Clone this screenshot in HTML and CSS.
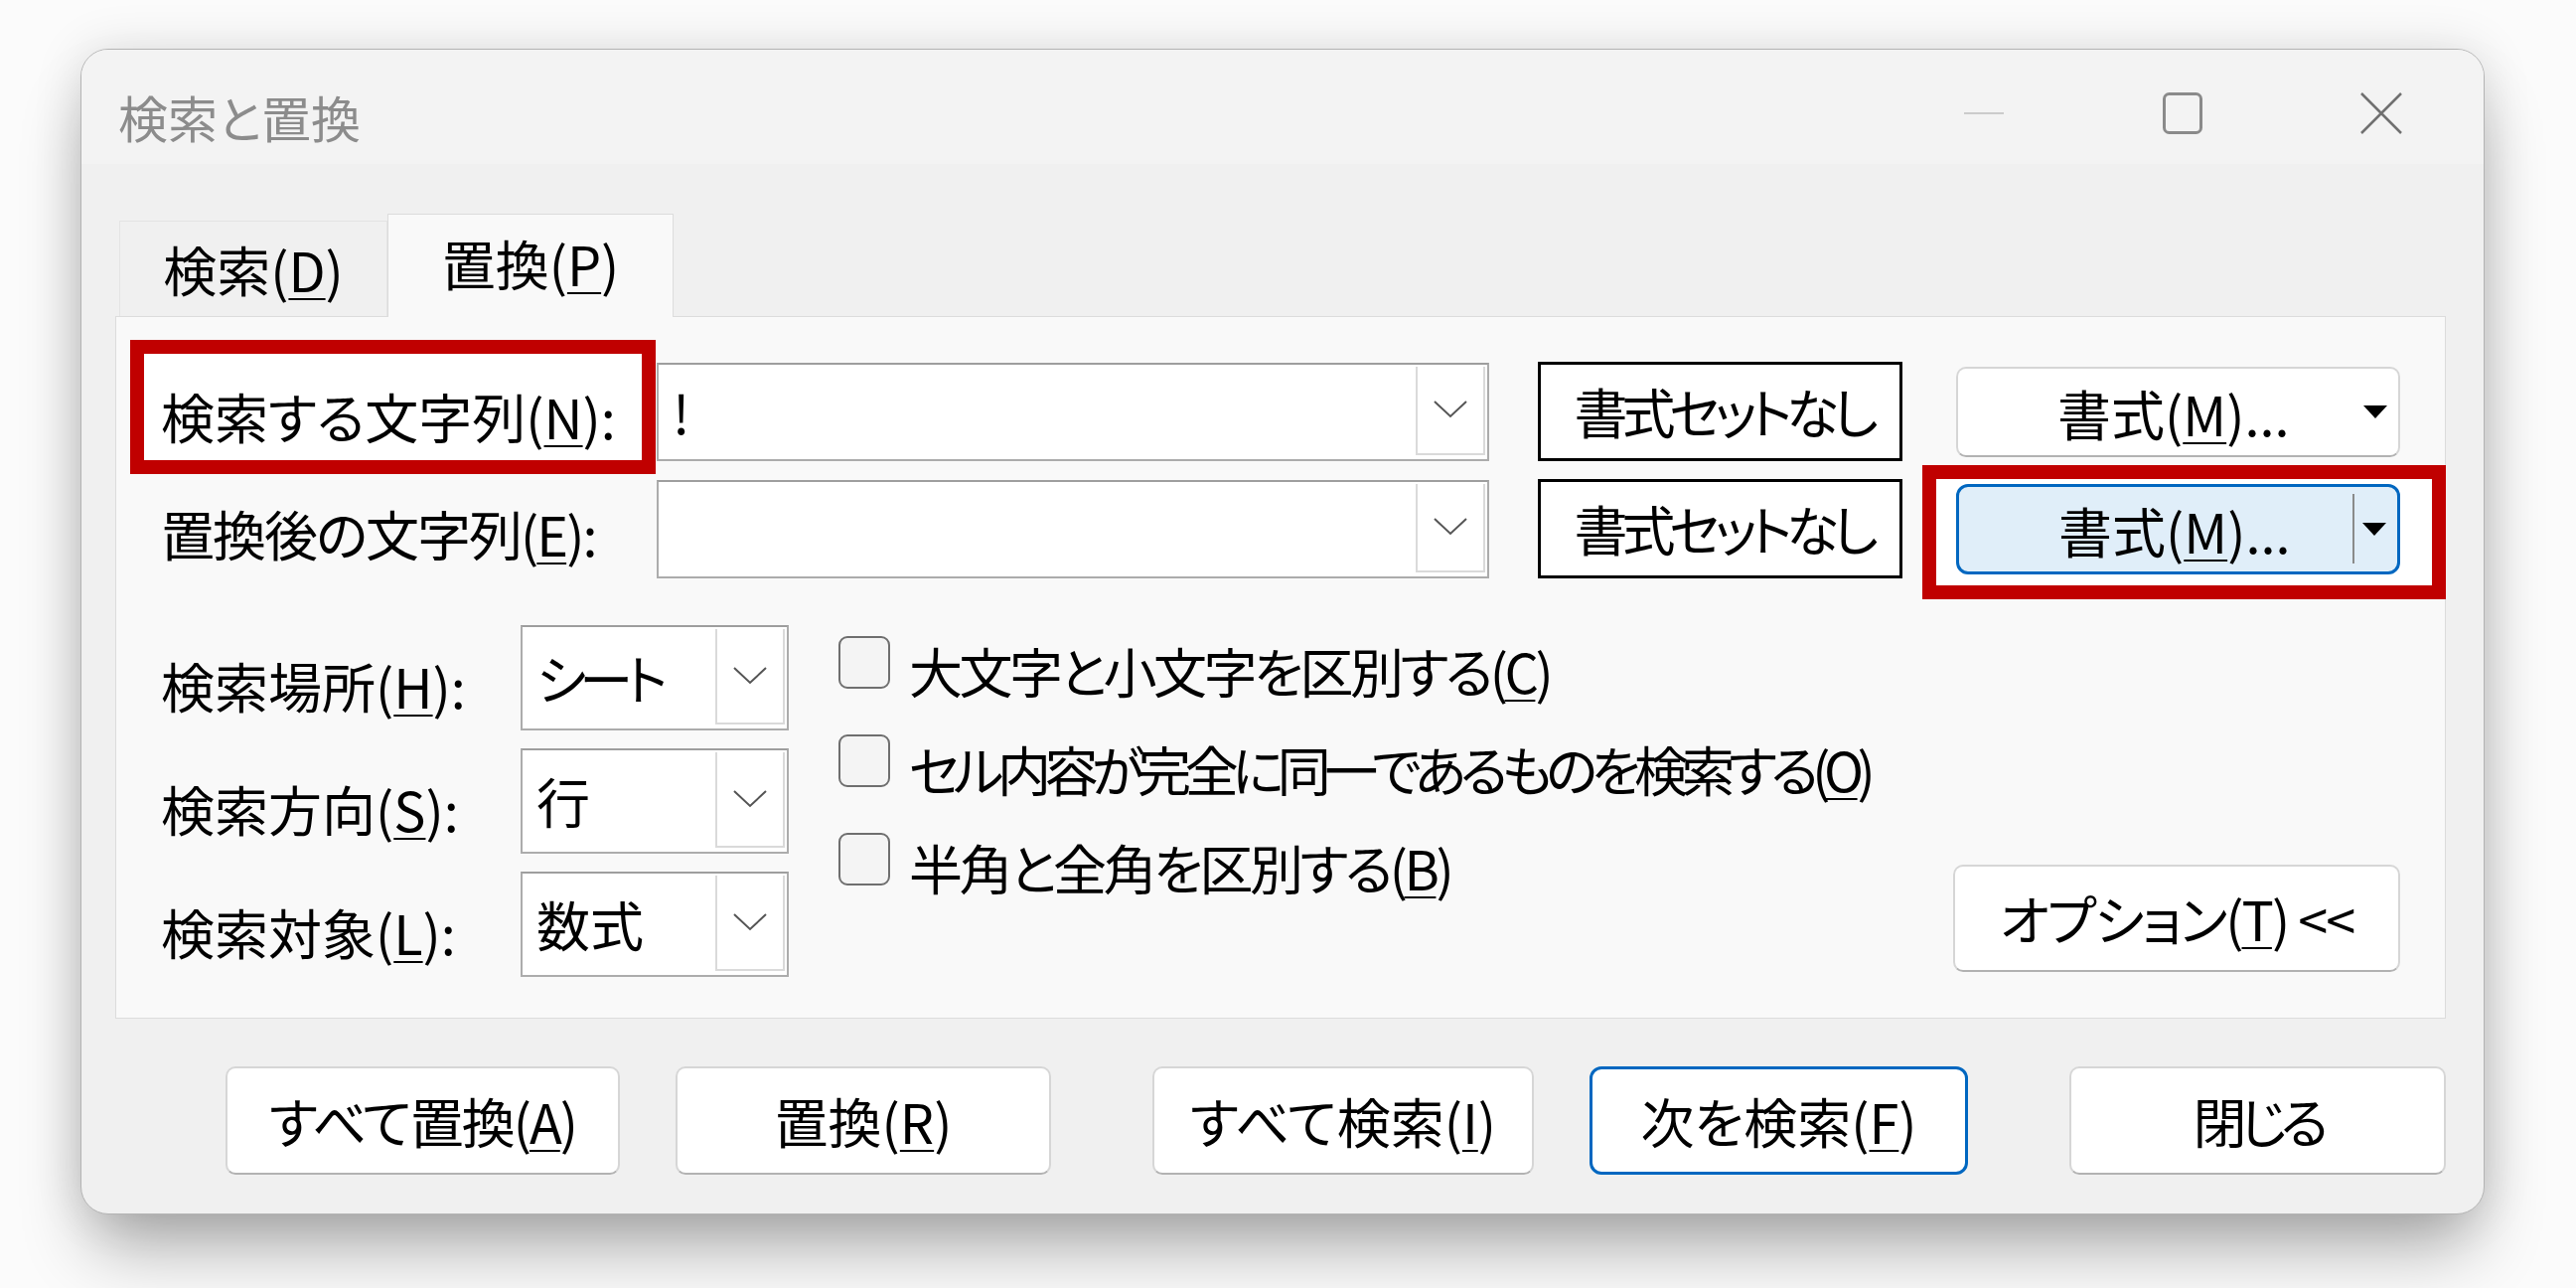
FILE: index.html
```html
<!DOCTYPE html>
<html lang="ja">
<head>
    <meta charset="UTF-8">
    <title>検索と置換</title>
    <link rel="stylesheet" href="styles.css">
</head>
<body>

<div class="dialog">
    <div class="titlebar">
        <span class="title">検索と置換</span>
        <div class="controls">
            <span class="ctl"><svg width="40" height="4"><line x1="0" y1="2" x2="40" y2="2" stroke="#cbcbcb" stroke-width="2"/></svg></span>
            <span class="ctl"><svg width="40" height="42"><rect x="1.5" y="1.5" width="37" height="39" rx="5" fill="none" stroke="#8a8a8a" stroke-width="3"/></svg></span>
            <span class="ctl"><svg width="44" height="42"><path d="M2 1 L42 41 M42 1 L2 41" stroke="#707070" stroke-width="2.5" fill="none"/></svg></span>
        </div>
    </div>

    <div class="content">
        <div class="tabs">
            <div class="tab">検索(<u>D</u>)</div>
            <div class="tab active">置換(<u>P</u>)</div>
        </div>

        <div class="panel">
            <div class="row">
                <div class="label-cell">
                    <span class="mark mark-label"></span>
                    <span class="label">検索する文字列(<u>N</u>):</span>
                </div>
                <div class="combo wide">
                    <span class="value">!</span>
                    <span class="drop"><svg width="34" height="18"><polyline points="1,1 17,16 33,1" fill="none" stroke="#555" stroke-width="2"/></svg></span>
                </div>
                <button class="plain">書式セットなし</button>
                <div class="fmt-cell">
                    <button class="btn fmt">
                        <span class="fmt-text">書式(<u>M</u>)...</span>
                        <span class="split"></span>
                        <svg width="24" height="13"><polygon points="0,0 24,0 12,13" fill="#000"/></svg>
                    </button>
                </div>
            </div>

            <div class="row">
                <div class="label-cell">
                    <span class="label narrow">置換後の文字列(<u>E</u>):</span>
                </div>
                <div class="combo wide">
                    <span class="value"></span>
                    <span class="drop"><svg width="34" height="18"><polyline points="1,1 17,16 33,1" fill="none" stroke="#555" stroke-width="2"/></svg></span>
                </div>
                <button class="plain">書式セットなし</button>
                <div class="fmt-cell">
                    <span class="mark mark-btn"></span>
                    <button class="btn fmt hot">
                        <span class="fmt-text">書式(<u>M</u>)...</span>
                        <span class="split shown"></span>
                        <svg width="24" height="13"><polygon points="0,0 24,0 12,13" fill="#000"/></svg>
                    </button>
                </div>
            </div>

            <div class="lower">
                <div class="fields">
                    <span>検索場所(<u>H</u>):</span>
                    <div class="combo small">
                        <span class="value kana">シート</span>
                        <span class="drop"><svg width="34" height="18"><polyline points="1,1 17,16 33,1" fill="none" stroke="#555" stroke-width="2"/></svg></span>
                    </div>
                    <span>検索方向(<u>S</u>):</span>
                    <div class="combo small">
                        <span class="value">行</span>
                        <span class="drop"><svg width="34" height="18"><polyline points="1,1 17,16 33,1" fill="none" stroke="#555" stroke-width="2"/></svg></span>
                    </div>
                    <span>検索対象(<u>L</u>):</span>
                    <div class="combo small">
                        <span class="value">数式</span>
                        <span class="drop"><svg width="34" height="18"><polyline points="1,1 17,16 33,1" fill="none" stroke="#555" stroke-width="2"/></svg></span>
                    </div>
                </div>

                <div class="checks">
                    <label class="check"><span class="box"></span><span class="narrower">大文字と小文字を区別する(<u>C</u>)</span></label>
                    <label class="check"><span class="box"></span><span class="kana">セル内容が完全に同一であるものを検索する(<u>O</u>)</span></label>
                    <label class="check"><span class="box"></span><span class="narrower">半角と全角を区別する(<u>B</u>)</span></label>
                </div>

                <button class="btn options narrow">オプション(<u>T</u>) &lt;&lt;</button>
            </div>
        </div>

        <div class="actions">
            <div class="group">
                <button class="btn act w-all narrow">すべて置換(<u>A</u>)</button>
                <button class="btn act w-one">置換(<u>R</u>)</button>
            </div>
            <div class="group">
                <button class="btn act w-find">すべて検索(<u>I</u>)</button>
                <button class="btn act w-next default">次を検索(<u>F</u>)</button>
            </div>
            <button class="btn act w-close kana">閉じる</button>
        </div>
    </div>
</div>

</body>
</html>
```

FILE: styles.css
```css
html {
    height: 100%;
}
body {
    margin: 0;
    min-height: 100%;
    padding: 49px 0 0 81px;
    box-sizing: border-box;
    background-color: #fbfbfb;
    font-family: "Noto Sans CJK JP", "Noto Sans", sans-serif;
    font-feature-settings: "palt";
    font-size: 54px;
    line-height: 1;
    color: #000;
}
u {
    text-decoration-thickness: 2px;
    text-underline-offset: 6px;
}
button {
    font: inherit;
    color: inherit;
    padding: 0;
    cursor: default;
}

.narrow { letter-spacing: -2px; }
.narrower { letter-spacing: -3.5px; }
.kana { letter-spacing: -6.5px; }

/* window frame */
.dialog {
    width: 2420px;
    height: 1173px;
    box-sizing: border-box;
    border: 1px solid #b4b4b4;
    border-radius: 28px;
    background-color: #f0f0f0;
    box-shadow: 0 44px 70px -12px rgba(0, 0, 0, 0.32), 0 0 50px rgba(0, 0, 0, 0.12);
    overflow: hidden;
    display: flex;
    flex-direction: column;
}
.titlebar {
    height: 115px;
    box-sizing: border-box;
    padding: 18px 3px 0 37px;
    display: flex;
    align-items: center;
    background-color: #f3f3f3;
}
.title {
    font-size: 50px;
    color: #8c8c8c;
}
.controls {
    margin-left: auto;
    margin-top: -6px;
    display: flex;
}
.ctl {
    width: 200px;
    display: flex;
    justify-content: center;
    align-items: center;
}
.ctl svg {
    display: block;
}

.content {
    flex: 1;
    padding: 50px 38px 0 34px;
}

/* tabs */
.tabs {
    display: flex;
    align-items: flex-end;
    height: 103px;
    margin-left: 4px;
    position: relative;
    z-index: 1;
}
.tab {
    width: 270px;
    height: 96px;
    box-sizing: border-box;
    border: 1px solid #e4e4e4;
    border-bottom: none;
    background-color: #f0f0f0;
    display: flex;
    align-items: center;
    justify-content: center;
}
.tab.active {
    width: 288px;
    height: 104px;
    margin-bottom: -1px;
    padding-bottom: 6px;
    background-color: #f9f9f9;
    border-color: #dcdcdc;
}

.panel {
    height: 707px;
    box-sizing: border-box;
    border: 1px solid #dcdcdc;
    background-color: #f9f9f9;
    padding: 45px 45px 0 14px;
}

/* find / replace rows */
.row {
    display: flex;
    align-items: center;
    height: 100px;
}
.row + .row {
    margin-top: 18px;
}
.label-cell {
    width: 530px;
    height: 100%;
    position: relative;
    display: flex;
    align-items: center;
}
.label {
    position: relative;
    padding-left: 31px;
    top: 5px;
}
.mark {
    position: absolute;
    box-sizing: border-box;
    border: 14px solid #c00000;
    background-color: #fff;
}
.mark-label {
    left: 0;
    top: -22px;
    width: 529px;
    height: 135px;
}
.mark-btn {
    left: -34px;
    top: -19px;
    right: -46px;
    bottom: -25px;
}

.combo {
    display: flex;
    flex-shrink: 0;
    box-sizing: border-box;
    background-color: #fff;
    border: 2px solid #acacac;
    border-top-color: #9e9e9e;
}
.combo.wide {
    width: 838px;
    height: 99px;
}
.combo.small {
    width: 270px;
    height: 106px;
}
.value {
    flex: 1;
    display: flex;
    align-items: center;
    padding-left: 14px;
}
.drop {
    width: 70px;
    margin: 2px 2px 4px 0;
    box-sizing: border-box;
    border: 2px solid #dadada;
    border-top: none;
    display: flex;
    align-items: center;
    justify-content: center;
}

.plain {
    margin-left: 49px;
    width: 367px;
    height: 100px;
    flex-shrink: 0;
    border: 3px solid #000;
    background-color: #fff;
    letter-spacing: -6px;
    text-indent: 6px;
}

.btn {
    background-color: #fff;
    border: 2px solid #d6d6d6;
    border-bottom-color: #b2b2b2;
    border-radius: 10px;
}
.fmt-cell {
    position: relative;
    margin-left: 54px;
    display: flex;
}
.fmt {
    position: relative;
    width: 447px;
    height: 91px;
    display: flex;
    align-items: center;
    padding: 0 11px 0 100px;
}
.fmt-text {
    padding-top: 4px;
}
.split {
    margin-left: auto;
    margin-right: 8px;
    width: 2px;
    height: 70px;
}
.split.shown {
    background-color: #8a8a8a;
}
.fmt.hot {
    background-color: #e0eef9;
    border: 3px solid #0067c0;
    border-radius: 12px;
}

/* search options */
.lower {
    display: flex;
    margin-top: 47px;
}
.fields {
    display: grid;
    grid-template-columns: 362px 270px;
    grid-auto-rows: 106px;
    row-gap: 18px;
    align-items: center;
    padding-left: 31px;
    flex-shrink: 0;
}
.fields > span {
    position: relative;
    top: 8px;
}
.checks {
    margin: 11px 0 0 50px;
    display: flex;
    flex-direction: column;
    gap: 46px;
    white-space: nowrap;
}
.check {
    display: flex;
    align-items: center;
    gap: 19px;
    height: 53px;
}
.check > span:last-child {
    position: relative;
    top: 8px;
}
.box {
    width: 52px;
    height: 53px;
    flex-shrink: 0;
    box-sizing: border-box;
    border: 2px solid #6f6f6f;
    border-radius: 9px;
    background-color: #f4f4f4;
}
.options {
    margin: 0 0 5px auto;
    align-self: flex-end;
    flex-shrink: 0;
    width: 450px;
    height: 108px;
}

/* dialog buttons */
.actions {
    display: flex;
    gap: 102px;
    margin-top: 48px;
    padding-left: 111px;
}
.group {
    display: flex;
    gap: 56px;
}
.act {
    height: 109px;
}
.w-all { width: 397px; }
.w-one { width: 378px; }
.w-find { width: 384px; }
.w-next { width: 381px; }
.w-close { width: 382px; }
.btn.default {
    border: 3px solid #0067c0;
    border-radius: 12px;
}
```
